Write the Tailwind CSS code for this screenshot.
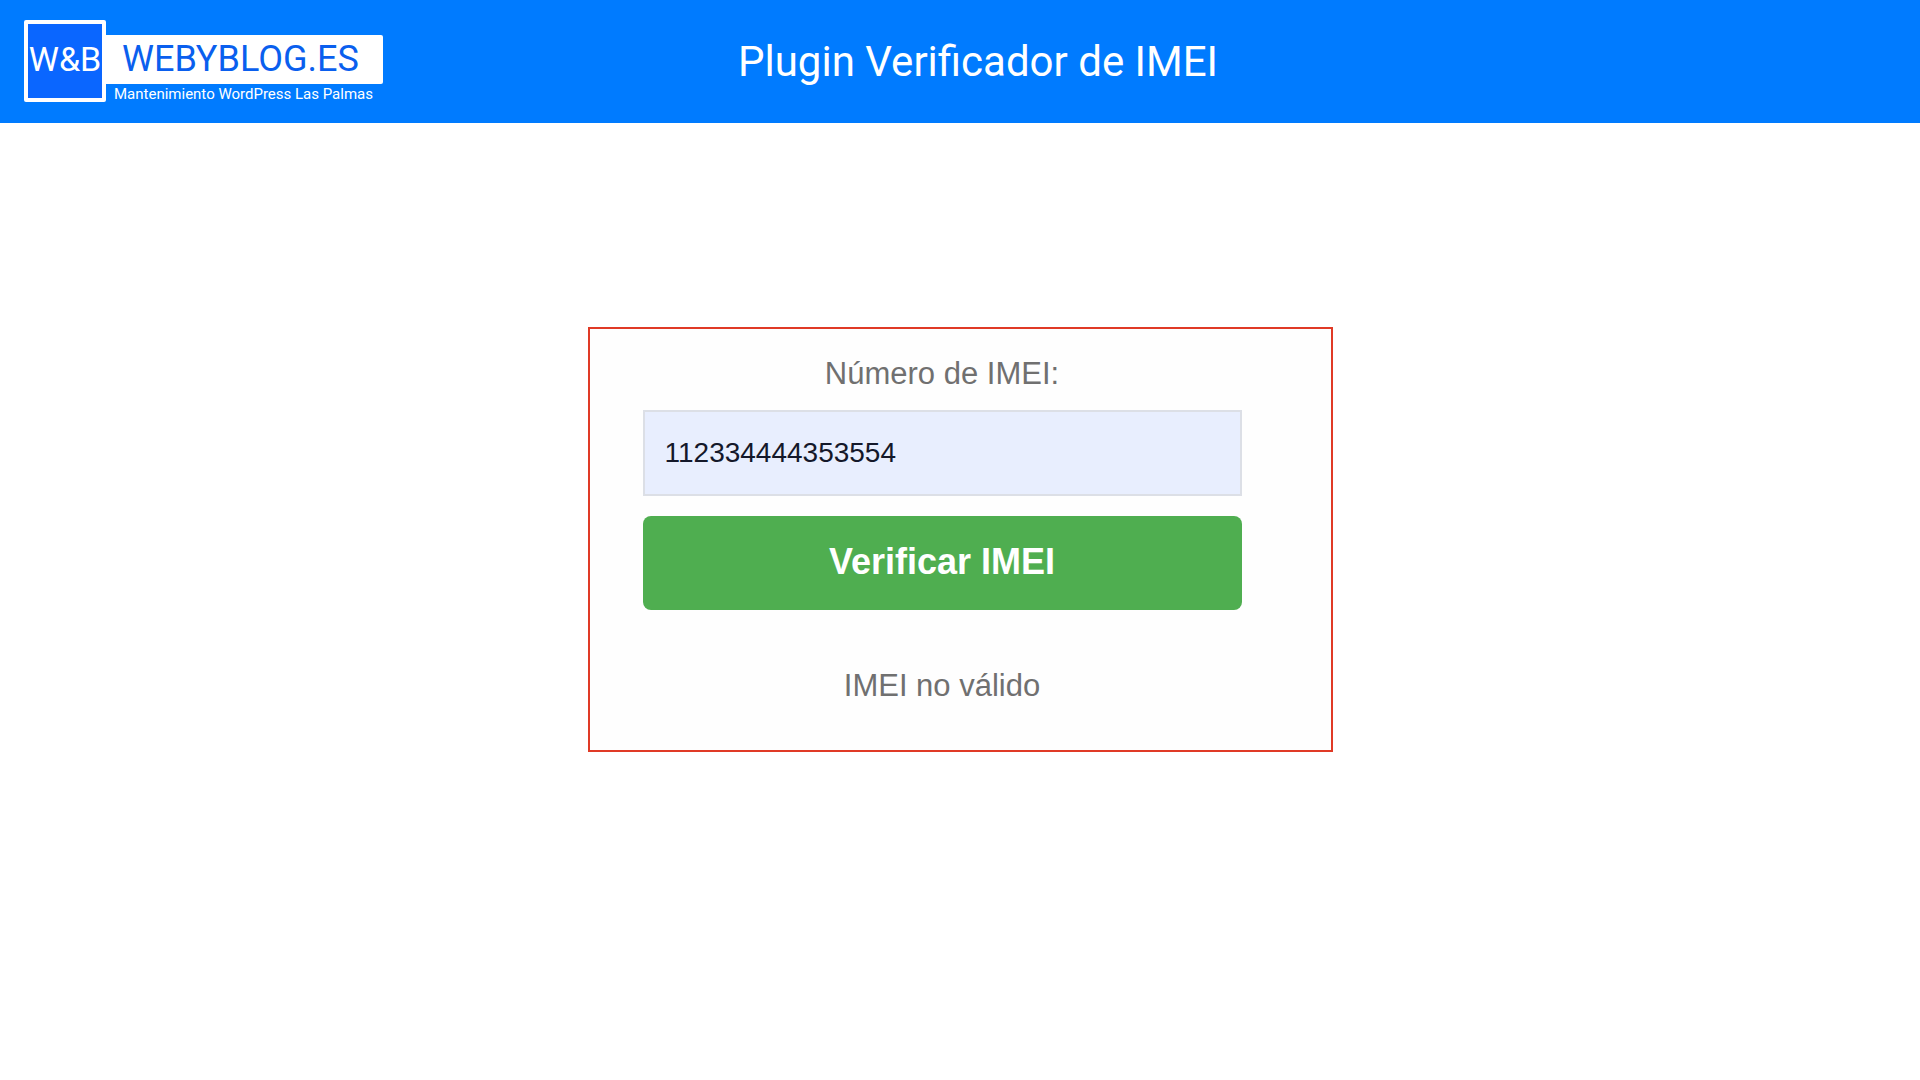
<!DOCTYPE html>
<html lang="es">
<head>
    <meta charset="UTF-8">
    <meta name="viewport" content="width=device-width, initial-scale=1.0">
    <title>Plugin Verificador de IMEI</title>
    <script src="https://cdn.jsdelivr.net/npm/@tailwindcss/browser@4"></script>
</head>
<body class="bg-white min-h-screen font-['Liberation_Sans',sans-serif]">
    <!-- Header -->
    <header class="grid grid-cols-[1fr_auto_1fr] items-center bg-[#007bff] pl-6 pt-5 pb-[19px] font-['Roboto',sans-serif] text-white">
        <a href="#" class="flex items-start">
            <span class="flex size-[82px] shrink-0 items-center justify-center rounded-xs border-4 border-white bg-[#0a66ff] pb-1 text-[34px]">W&amp;B</span>
            <span class="flex flex-col pt-[15px]">
                <span class="flex h-[49px] items-center rounded-r-xs bg-white pr-6 pb-0.5 pl-4 text-4xl text-[#0a5fee]">WEBYBLOG.ES</span>
                <span class="pl-2 text-[15px] leading-5">Mantenimiento WordPress Las Palmas</span>
            </span>
        </a>
        <h1 class="pl-3 text-[42px] leading-[82px]">Plugin Verificador de IMEI</h1>
    </header>

    <!-- IMEI Form -->
    <main class="flex justify-center px-4 pt-[204px]">
        <form id="imeiForm" class="w-full max-w-[745px] border-2 border-[#e03a26] bg-[#fefefe] pt-[25px] pr-[89px] pb-11 pl-[53px] text-center">
            <label for="imei" class="block text-[31px] leading-10 text-[#707070]">Número de IMEI:</label>
            <input type="text" id="imei" value="112334444353554" class="mt-4 block h-[86px] w-full border-2 border-[#dcdfe6] bg-[#e8eefe] px-5 text-[28px] text-[#14182a]">
            <button type="submit" class="mt-5 block h-[94px] w-full rounded-lg bg-[#4fae50] pb-0.5 text-4xl font-bold text-white">Verificar IMEI</button>
            <p id="result" class="mt-14 text-[31px] leading-10 text-[#707070]">IMEI no válido</p>
        </form>
    </main>

    <script>
        document.getElementById("imeiForm").addEventListener("submit", function (e) {
            e.preventDefault();
            let imei = document.getElementById("imei").value.trim();
            let sum = 0;

            // Luhn check
            for (let i = 0; i < imei.length; i++) {
                let n = Number(imei[i]);
                if (i % 2 === 1) n *= 2;
                sum += n > 9 ? n - 9 : n;
            }

            let valid = /^\d{15}$/.test(imei) && sum % 10 === 0;
            document.getElementById("result").textContent = valid ? "IMEI válido" : "IMEI no válido";
        });
    </script>
</body>
</html>
